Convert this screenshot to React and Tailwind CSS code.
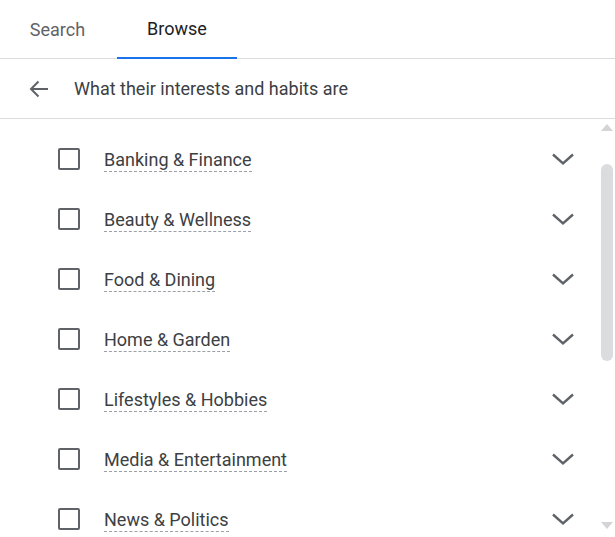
import React from 'react';

const items = [
  'Banking & Finance',
  'Beauty & Wellness',
  'Food & Dining',
  'Home & Garden',
  'Lifestyles & Hobbies',
  'Media & Entertainment',
  'News & Politics',
];

const Chevron = () => (
  <svg width="24" height="24" viewBox="0 0 24 24" className="text-[#5f6368]">
    <path d="M2 7.5l10 9 10-9" fill="none" stroke="currentColor" strokeWidth="2.4" />
  </svg>
);

const App = () => {
  return (
    <div className="w-[615px] h-[537px] bg-white overflow-hidden flex flex-col font-['Roboto',sans-serif]">
      {/* Tabs */}
      <div className="flex h-[59px] border-b border-[#dadce0] shrink-0">
        <div className="w-[115px] flex items-center justify-center text-[18px] text-[#5f6368]">Search</div>
        <div className="ml-[2px] w-[120px] flex items-center justify-center text-[18px] text-[#202124] border-b-2 border-[#1a73e8] -mb-px">
          Browse
        </div>
      </div>

      {/* Back row */}
      <div className="flex items-center h-[60px] border-b border-[#dadce0] shrink-0">
        <div className="w-[74px] flex items-center pl-[27px]">
          <svg width="24" height="24" viewBox="0 0 24 24" className="text-[#5f6368]">
            <path d="M21 12H4.5M11.5 4.5L4 12l7.5 7.5" fill="none" stroke="currentColor" strokeWidth="2" />
          </svg>
        </div>
        <span className="text-[18px] text-[#3c4043]">What their interests and habits are</span>
      </div>

      {/* List + scrollbar */}
      <div className="flex flex-1 min-h-0">
        <div className="flex-1 overflow-hidden pt-[10px]">
          {items.map((label) => (
            <div key={label} className="flex items-center h-[60px]">
              <div className="w-[104px] flex items-center pl-[58px]">
                <div className="w-[22px] h-[22px] border-2 border-[#5f6368] rounded-[2px]" />
              </div>
              <span className="flex-1 text-[18px] text-[#3c4043]">
                <span className="border-b border-dashed border-[#9aa0a6] pb-px">{label}</span>
              </span>
              <div className="w-[24px] mr-[25px] flex items-center">
                <Chevron />
              </div>
            </div>
          ))}
        </div>
        <div className="w-[15px] flex flex-col items-center shrink-0 pr-[2px]">
          <div className="h-[16px] flex items-center justify-center">
            <div className="w-0 h-0 border-l-[6px] border-r-[6px] border-b-[7px] border-l-transparent border-r-transparent border-b-[#d4d4d8]" />
          </div>
          <div className="mt-[29px] w-[12px] h-[197px] rounded-full bg-[#dadce0]" />
          <div className="flex-1" />
          <div className="h-[16px] mb-[4px] flex items-center justify-center">
            <div className="w-0 h-0 border-l-[6px] border-r-[6px] border-t-[7px] border-l-transparent border-r-transparent border-t-[#d4d4d8]" />
          </div>
        </div>
      </div>
    </div>
  );
};

export default App;
